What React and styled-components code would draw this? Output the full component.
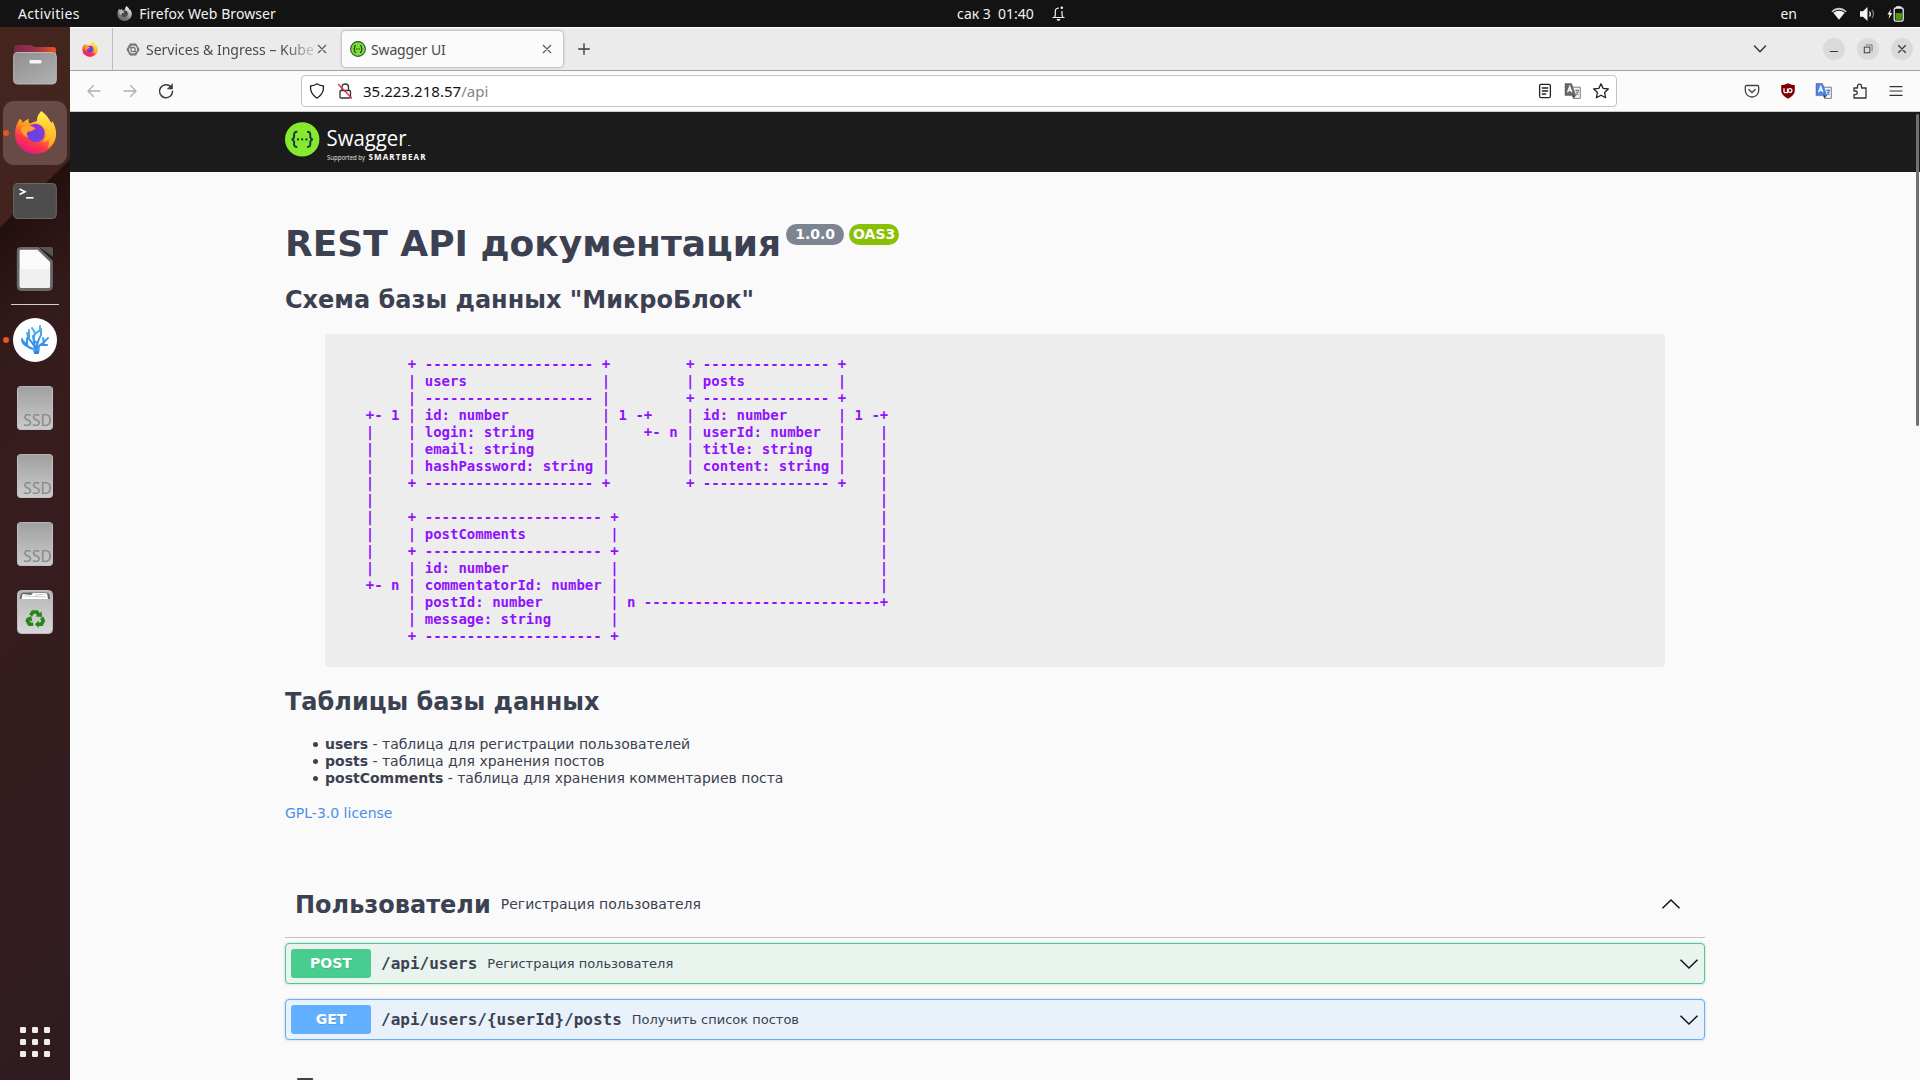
import React from "react";
import styled, { createGlobalStyle } from "styled-components";

const Global = createGlobalStyle`
  * { box-sizing: border-box; }
  html, body { margin: 0; padding: 0; overflow: hidden; }
  body { background: #fafafa; font-family: "Noto Sans", "Open Sans", sans-serif; }
  svg { display: block; flex: none; overflow: visible; }
`;

const Desktop = styled.div`
  width: 1920px; height: 1080px; overflow: hidden;
  display: grid; grid-template: 27px 1053px / 70px 1850px;
`;
const TopBar = styled.header`
  grid-column: 1 / 3; background: #131313; color: #f2f2f2;
  font-size: 14px; line-height: 27px;
  display: grid; grid-template-columns: 957px 1fr auto;
`;
const BarGroup = styled.div`
  display: flex; align-items: center; white-space: pre;
  padding-left: ${(p) => p.$left || 0}px; padding-right: ${(p) => p.$right || 0}px;
`;
const BarText = styled.span`
  letter-spacing: ${(p) => p.$spacing || 0}px; margin-right: ${(p) => p.$after || 0}px;
  white-space: pre;
`;

const Dock = styled.nav`
  display: flex; flex-direction: column; align-items: center; padding-top: 4px;
  background: linear-gradient(136deg, #46251f 0, #42231e 143px, #230f0e 145px, #2a1314 180px, #331a1b 230px, #381d1f 330px, #351c1f 500px, #301c20 780px);
`;
const DockItem = styled.div`
  width: 70px; height: 68px; flex: none; display: grid; place-items: center; position: relative;
`;
const DockTile = styled.div`
  width: 64px; height: 64px; border-radius: 11px; display: grid; place-items: center; padding-bottom: 2px;
  background: ${(p) => (p.$active ? "#684b47" : "transparent")};
`;
const RunningDot = styled.i`
  position: absolute; left: 3px; top: 31px; width: 6px; height: 6px; border-radius: 50%; background: #e95420;
`;
const DockRule = styled.div`
  width: 48px; height: 1px; background: #d5cdcb; margin: 1px 0; flex: none;
`;
const SsdIcon = styled.div`
  width: 36px; height: 44px; border-radius: 4px; border: 1px solid #c1c1c1; border-top-color: #b5b5b5;
  background: linear-gradient(#a0a0a0, #cbcbcb); color: #888;
  font: 15.5px/66px "Noto Sans", sans-serif; letter-spacing: .1px; text-align: right; overflow: hidden;
`;
const AppGrid = styled.div`
  margin-top: auto; margin-bottom: 23px; display: grid; grid-template-columns: repeat(3, 6px); gap: 6px;
`;
const AppDot = styled.i`width: 6px; height: 6px; border-radius: 1.3px; background: #f0efee;`;

const Window = styled.main`
  display: grid; grid-template-rows: 44px 41px 968px; background: #fafafa; min-width: 0;
`;
const TabStrip = styled.div`
  background: #ebebeb; border-top: 1px solid #fff; border-bottom: 1px solid #a3a3a3;
  display: flex; align-items: center; color: #4a4a4f; font-size: 14px;
`;
const PinnedTab = styled.div`
  width: 43px; height: 42px; border-right: 1px solid #bdbdbd; display: flex; align-items: center; padding-left: 12px;
`;
const Tab = styled.div`
  width: ${(p) => p.$width}px; height: 36px; display: flex; align-items: center; flex: none;
  padding: 0 10px 0 ${(p) => p.$pad}px; border-radius: 4px;
  background: ${(p) => (p.$active ? "#fbfbfb" : "transparent")};
  box-shadow: ${(p) => (p.$active ? "0 0 3px rgba(0,0,0,.42)" : "none")};
`;
const TabLabel = styled.span`
  width: ${(p) => p.$width}px; margin-left: ${(p) => p.$gap}px; overflow: hidden; white-space: nowrap; flex: none;
  letter-spacing: ${(p) => p.$spacing}px; line-height: 22px; padding-top: 2px;
  ${(p) => p.$fade && "mask-image: linear-gradient(90deg, #000 82%, transparent 104%);"}
`;
const Push = styled.div`margin-left: auto;`;
const WindowButtons = styled.div`display: flex; gap: 12px; margin: 0 7px 0 55px;`;
const RoundButton = styled.div`
  width: 22px; height: 22px; border-radius: 50%; background: #dadada; display: grid; place-items: center;
`;
const NavBar = styled.div`
  background: #fbfbfb; border-bottom: 1px solid #cbcbcb; display: flex; align-items: center; padding: 0 16px;
`;
const NavButtons = styled.div`display: flex; gap: 20px; width: 215px; align-items: center;`;
const UrlBox = styled.div`
  width: 1316px; height: 32px; background: #fff; border: 1px solid #c3c3c4; border-radius: 4px;
  display: flex; align-items: center; padding: 0 7px;
`;
const Address = styled.span`
  margin-left: 10px; font-size: 15px; color: #111; line-height: 24px; letter-spacing: .02px;
  span { color: #838386; }
`;
const UrlActions = styled.div`margin-left: auto; display: flex; gap: 12px;`;
const Extensions = styled.div`margin-left: auto; display: flex; gap: 20px;`;
const LockSlot = styled.div`margin-left: 12px;`;

const Page = styled.div`
  position: relative; overflow: hidden; background: #fafafa; color: #3b4151;
  font-family: "DejaVu Sans", sans-serif; font-size: 14px;
`;
const ScrollThumb = styled.div`
  position: absolute; right: 1px; top: 2px; width: 3px; height: 312px; border-radius: 2px; background: #717171;
`;
const PageHeader = styled.div`height: 60px; background: #1b1b1b; padding: 10px 0 0 215px;`;
const Wrapper = styled.div`width: 1420px; margin: 0 0 0 215px;`;
const TitleRow = styled.div`
  display: flex; align-items: flex-start; padding-top: 50px; height: 92px;
`;
const Title = styled.h1`margin: 0; font-size: 36px; line-height: 44px; white-space: nowrap;`;
const Badge = styled.span`
  height: 21px; line-height: 20px; border-radius: 10.5px; background: ${(p) => p.$color}; color: #fff;
  font-weight: 700; margin: 2px 0 0 5px; width: ${(p) => p.$width}px; text-align: center; flex: none;
`;
const Heading = styled.h2`margin: 0; font-size: 24px; line-height: 30px; height: ${(p) => p.$height}px; padding-top: ${(p) => p.$top || 0}px;`;
const Schema = styled.pre`
  margin: 0 40px; height: 333px; padding: 22px 7px; border-radius: 4px; background: #ededed; color: #9012fe;
  font: 700 14px/17px "DejaVu Sans Mono", monospace;
`;
const TableList = styled.ul`
  margin: 0; padding: 0 0 0 40px; line-height: 17px; height: 68px; list-style: none;
  li::before {
    content: ""; display: inline-block; width: 5px; height: 5px; border-radius: 50%; background: #3b4151;
    margin: 0 7.5px 0 -12.5px; vertical-align: 2px;
  }
`;
const License = styled.a`display: block; color: #4990e2; line-height: 18px;`;
const Section = styled.section`margin-top: ${(p) => p.$top}px;`;
const SectionHead = styled.div`
  display: flex; align-items: center; height: 66px; padding: 0 25px 0 10px; border-bottom: 1px solid #bfc0c2;
  margin-bottom: 5px;
`;
const SectionName = styled.h3`margin: 0 10px 0 0; font-size: 24px; line-height: 30px;`;
const SectionNote = styled.span`line-height: 18px; padding-bottom: 2px;`;
const SectionToggle = styled.div`margin-left: auto; padding-bottom: 2px;`;
const Operation = styled.div`
  height: 41px; margin-bottom: 15px; border: 1px solid ${(p) => p.$color}; border-radius: 4px;
  background: ${(p) => p.$tint}; box-shadow: 0 0 3px rgba(0,0,0,.19);
  display: flex; align-items: center; padding: 0 6px 0 5px;
`;
const Method = styled.span`
  width: 80px; height: 29px; line-height: 28px; border-radius: 3px; background: ${(p) => p.$color}; color: #fff;
  text-align: center; font-weight: 700; text-shadow: 0 1px 0 rgba(0,0,0,.1);
`;
const Path = styled.code`
  margin: 0 10px; font: 700 16px/20px "DejaVu Sans Mono", monospace;
`;
const Summary = styled.span`font-size: 13px;`;

const SCHEMA_LINES = [
  "         + -------------------- +         + --------------- +",
  "         | users                |         | posts           |",
  "         | -------------------- |         + --------------- +",
  "    +- 1 | id: number           | 1 -+    | id: number      | 1 -+",
  "    |    | login: string        |    +- n | userId: number  |    |",
  "    |    | email: string        |         | title: string   |    |",
  "    |    | hashPassword: string |         | content: string |    |",
  "    |    + -------------------- +         + --------------- +    |",
  "    |                                                            |",
  "    |    + --------------------- +                               |",
  "    |    | postComments          |                               |",
  "    |    + --------------------- +                               |",
  "    |    | id: number            |                               |",
  "    +- n | commentatorId: number |                               |",
  "         | postId: number        | n ----------------------------+",
  "         | message: string       |",
  "         + --------------------- +",
];

const TABLES = [
  ["users", "таблица для регистрации пользователей"],
  ["posts", "таблица для хранения постов"],
  ["postComments", "таблица для хранения комментариев поста"],
];

const OPERATIONS = [
  { method: "POST", path: "/api/users", text: "Регистрация пользователя", color: "#49cc90", tint: "#e8f4ed" },
  { method: "GET", path: "/api/users/{userId}/posts", text: "Получить список постов", color: "#61affe", tint: "#e9f1fa" },
];

const Line = ({ size = 16, d, color = "#3a3a3f", w = 1.4, children }) => (
  <svg width={size} height={size} viewBox="0 0 16 16" fill="none" stroke={color} strokeWidth={w} strokeLinecap="round" strokeLinejoin="round">
    {d && <path d={d} />}
    {children}
  </svg>
);

const Firefox = ({ size, id, mono }) => (
  <svg width={size} height={size} viewBox="0 0 44 44">
    <defs>
      <linearGradient id={id + "b"} x1=".85" y1="0" x2=".3" y2="1">
        <stop offset="0" stopColor={mono ? "#ddd" : "#fff44f"} /><stop offset=".4" stopColor={mono ? "#aaa" : "#ff9a1f"} />
        <stop offset=".7" stopColor={mono ? "#777" : "#ff3647"} /><stop offset="1" stopColor={mono ? "#666" : "#e31587"} />
      </linearGradient>
      <radialGradient id={id + "g"} cx=".5" cy=".7" r=".7">
        <stop offset="0" stopColor={mono ? "#555" : "#5a4be0"} /><stop offset="1" stopColor={mono ? "#333" : "#9b2fd8"} />
      </radialGradient>
      <linearGradient id={id + "y"} x1="0" y1="0" x2="0" y2="1">
        <stop offset="0" stopColor={mono ? "#eee" : "#fff04a"} /><stop offset="1" stopColor={mono ? "#999" : "#ffa51e"} />
      </linearGradient>
    </defs>
    <path d="M6 8Q8 9 9 12Q12 9 15 8Q14 11 16 13Q22 10 26 10L29 7Q38 9 39 14Q43 18 43 24A21 20 0 0 1 1 24Q1 15 6 8Z" fill={`url(#${id}b)`} />
    <path d="M28 0Q36 6 38 13Q39 11 39 10Q43 16 43 24Q42 33 35 38Q38 27 31 20Q30 14 24 12Q22 6 28 0Z" fill={`url(#${id}y)`} />
    <circle cx="22" cy="22.5" r="9.5" fill={`url(#${id}g)`} />
    <path d="M7 19Q9 14 16 15Q19 15 22 18Q19 21 15 21Q11 23 15 27Q9 26 7 19Z" fill={mono ? "#bbb" : "#ffa22b"} />
    <path d="M30 16Q36 25 29 32Q36 31 37 23Q36 17 30 16Z" fill={mono ? "#aaa" : "#ffbd2c"} opacity=".85" />
  </svg>
);

const Files = () => (
  <svg width="44" height="44" viewBox="0 0 44 44">
    <defs>
      <linearGradient id="fold"><stop offset="0" stopColor="#74294f" /><stop offset=".55" stopColor="#a33445" /><stop offset="1" stopColor="#e95420" /></linearGradient>
      <linearGradient id="gray" x2=".7" y2="1"><stop offset="0" stopColor="#8f8f8f" /><stop offset="1" stopColor="#adadad" /></linearGradient>
    </defs>
    <path d="M1 5Q1 2 4 2H17Q19 2 21 4H40Q43 4 43 7V22H1Z" fill="url(#fold)" />
    <rect x=".7" y="9.5" width="42.6" height="31.5" rx="4" fill="url(#gray)" stroke="#b9b9b9" />
    <rect x="16.5" y="17" width="12" height="3.4" rx="1" fill="#f7f7f7" />
  </svg>
);
const Terminal = () => (
  <svg width="44" height="44" viewBox="0 0 44 44">
    <rect x=".7" y="4.5" width="42.6" height="35" rx="4" fill="#4d4d4d" stroke="#686868" />
    <path d="M6.5 10L12 12.7L6.5 15.5" fill="none" stroke="#fff" strokeWidth="1.6" /><path d="M13 18.8H20.5" stroke="#fff" strokeWidth="1.6" />
  </svg>
);
const Libre = () => (
  <svg width="44" height="44" viewBox="0 0 44 44">
    <path d="M26 0H38Q40 0 40 2V10Z" fill="#555" />
    <path d="M8 1.3H25L38.5 14.5V39Q38.5 42.5 35 42.5H8.5Q5.2 42.5 5.2 39V4Q5.2 1.3 8 1.3Z" fill="#fafafa" stroke="#686868" strokeWidth="2.8" />
    <path d="M6.8 22H37V39Q37 41 34 41H9Q6.8 41 6.8 39Z" fill="#f0f0f0" />
  </svg>
);
const Coral = () => (
  <svg width="44" height="44" viewBox="0 0 44 44">
    <defs><linearGradient id="cor" x1="0" y1="0" x2="0" y2="1"><stop offset="0" stopColor="#4cb9ee" /><stop offset="1" stopColor="#2d7be8" /></linearGradient></defs>
    <circle cx="22" cy="22" r="22" fill="#fff" />
    <g fill="none" stroke="url(#cor)" strokeWidth="2" strokeLinecap="round" strokeLinejoin="round">
      <path d="M23 35V31Q16 31 14 27L9 22M14 27V20M14 28Q9 26 9 21M23 31Q20 25 16 21L14 15M16 20V12M23 31Q19 22 22 15L19 10M22 16L27 12V8M23 31Q25 22 28 17V11M24 25Q20 23 20 18M24 32Q26 26 31 25L30 20M29 26L35 20M29 27H34" />
      <path d="M20.8 31Q23 34 26 30L25 35H22Z" fill="#3385e8" />
    </g>
  </svg>
);
const Trash = () => (
  <svg width="44" height="44" viewBox="0 0 44 44">
    <defs><linearGradient id="tr" x1="0" y1="0" x2="0" y2="1"><stop offset="0" stopColor="#b6b6b6" /><stop offset="1" stopColor="#d8d8d8" /></linearGradient></defs>
    <rect x="4.5" y=".5" width="35" height="43" rx="4" fill="url(#tr)" stroke="#bdbdbd" />
    <path d="M7 9Q7 2.5 10 2.5H34Q37 2.5 37 9Z" fill="#666" />
    <path d="M8.5 9L9.5 4L18 5L20 3H34L35 9Z" fill="#fff" /><path d="M11 6L33 7M22 5L34 4" stroke="#aaa" strokeWidth=".6" />
    <g transform="translate(1.2 1)">
      <g fill="none" stroke="#26861a" strokeWidth="3.6">
        <path d="M16.5 24.5L18.6 21H22.6L24.6 24" /><path d="M27.6 26.5L29 30L27.3 33.2H23.5" /><path d="M19 33.2H15.2L13.2 29.8L14.8 27.4" />
      </g>
      <g fill="#26861a"><path d="M21.5 25.5L28 26L27.2 20.4Z" /><path d="M24.5 29.5L20.8 33.2L24.5 36.9Z" /><path d="M11.6 27.4L17.2 25L18 30.6Z" /></g>
    </g>
  </svg>
);

const Bell = () => (
  <svg width="13" height="15" viewBox="0 0 13 15" fill="none" stroke="#f2f2f2" strokeWidth="1.2">
    <path d="M.5 11.5H12.5M2.5 11.5L3.3 9V4.5Q3.8 2 7 2M10 5V9L10.8 11.5" /><circle cx="9.8" cy="1.8" r="1.3" fill="#f2f2f2" stroke="none" /><path d="M4.5 13H8.5L7.4 14.8H5.6Z" fill="#f2f2f2" stroke="none" />
  </svg>
);
const Wifi = () => (
  <svg width="16" height="14" viewBox="0 0 16 14"><path d="M.3 4.3Q8 -2.6 15.7 4.3L14.7 5.3Q8 .2 1.3 5.3Z" fill="#ccc" /><path d="M2.3 5.8Q8 1.7 13.7 5.8L8 12.7Z" fill="#f5f5f5" /></svg>
);
const Volume = () => (
  <svg width="15" height="14" viewBox="0 0 15 14" fill="none"><path d="M0 4.3H3L7.5 0V14L3 9.7H0Z" fill="#f5f5f5" /><path d="M9.5 4.5Q11.2 7 9.5 9.5" stroke="#eee" strokeWidth="1.3" /><path d="M12 2.8Q15 7 12 11.2" stroke="#777" strokeWidth="1.3" /></svg>
);
const Battery = () => (
  <svg width="17" height="16" viewBox="0 0 17 16"><path d="M4 3L.4 8.5H2.5L1.5 13L5.3 7H3.1Z" fill="#f5f5f5" /><rect x="7.2" y="2" width="9" height="13.2" rx="1.6" fill="none" stroke="#eee" strokeWidth="1.3" /><rect x="9.2" y=".2" width="5" height="1.8" fill="#eee" /><rect x="8.6" y="7" width="6.2" height="6.8" fill="#4e9a06" /></svg>
);
const Kube = () => (
  <svg width="14" height="13" viewBox="0 0 14 13"><path d="M4 .4H10L13.6 6.5L10 12.6H4L.4 6.5Z" fill="#737373" /><circle cx="7" cy="6.5" r="3.4" fill="none" stroke="#e4e4e4" strokeWidth="1.4" /><path d="M3 3L11 10" stroke="#737373" strokeWidth="1.2" /><circle cx="7" cy="6.5" r="1.5" fill="#eee" /></svg>
);
const Favicon = () => (
  <svg width="16" height="16" viewBox="0 0 16 16" fill="none" stroke="#173647"><circle cx="8" cy="8" r="7.4" fill="#7ede2b" stroke="#2b5a3a" strokeWidth="1.1" /><path d="M6 4.5Q4.5 4.5 4.7 6Q4.8 7.8 3.6 8Q4.8 8.2 4.7 10Q4.5 11.5 6 11.5M10 4.5Q11.5 4.5 11.3 6Q11.2 7.8 12.4 8Q11.2 8.2 11.3 10Q11.5 11.5 10 11.5" strokeWidth="1.1" /><path d="M6 8H10" strokeWidth="1.1" strokeDasharray="1 .6" /></svg>
);
const Cross = () => <Line size={10} w={1.7} color="#55555a" d="M2 2L14 14M14 2L2 14" />;
const Translate = ({ back, front, letter = "#fff" }) => (
  <svg width="16" height="16" viewBox="0 0 16 16">
    <path d="M6.5 4.2H15.3V15.4H8.6Z" fill="#f5f5f5" stroke="#7c7c7c" strokeWidth="1" />
    <path d="M0 .5H6.5L10.8 12.6H0Z" fill={back} stroke="#555" strokeWidth=".5" /><path d="M6.8 12.6H10.8L8.7 15.6Z" fill="#444" />
    <path d="M2.6 9.3L4.7 3.7L6.8 9.3M3.3 7.4H6" fill="none" stroke={letter} strokeWidth="1.3" />
    <path d="M10.3 7.4H14.2M12.2 6.2V7.4M13.6 7.5Q12.8 10.5 11 12M11 8.6L13.5 12" fill="none" stroke={front} strokeWidth="1.1" />
  </svg>
);
const Arrow = ({ up }) => (
  <svg width="18" height="10" viewBox="0 0 18 10" fill="none" stroke="#111" strokeWidth="1.5"><path d={up ? "M.5 9.2L9 1L17.5 9.2" : "M.5 .8L9 9L17.5 .8"} /></svg>
);

const SwaggerLogo = () => (
  <svg width="145" height="42" viewBox="0 0 145 42">
    <circle cx="17.2" cy="17.4" r="17.2" fill="#85ea2d" />
    <g fill="none" stroke="#173647" strokeWidth="2">
      <path d="M12.3 9.9Q9 9.6 9.1 12.7Q9.6 17.1 6.6 17.4Q9.6 17.7 9.1 22.1Q9 25.2 12.3 24.9" />
      <path d="M22.1 9.9Q25.4 9.6 25.3 12.7Q24.8 17.1 27.8 17.4Q24.8 17.7 25.3 22.1Q25.4 25.2 22.1 24.9" />
    </g>
    <g fill="#173647"><circle cx="13" cy="17.4" r="1.15" /><circle cx="17.2" cy="17.4" r="1.15" /><circle cx="21.4" cy="17.4" r="1.15" /></g>
    <text x="41.5" y="24" fontFamily="Open Sans" fontSize="21.5" textLength="80" lengthAdjust="spacingAndGlyphs" fill="#fff">Swagger</text>
    <rect x="123" y="23" width="2.4" height="1" fill="#aaa" />
    <text x="42" y="38" fontFamily="Open Sans" fontSize="6.3" textLength="38" lengthAdjust="spacingAndGlyphs" fill="#e4e4e4">Supported by</text>
    <text x="83.5" y="38" fontFamily="Open Sans" fontWeight="700" fontSize="8" textLength="57" lengthAdjust="spacing" fill="#fff">SMARTBEAR</text>
  </svg>
);

export default function App() {
  return (
    <>
      <Global />
      <Desktop>
        <TopBar>
          <BarGroup $left={18}>
            <BarText $spacing={0.35} $after={37}>Activities</BarText>
            <Firefox size={15} id="m" mono />
            <BarText $spacing={0.06}>{"  Firefox Web Browser"}</BarText>
          </BarGroup>
          <BarGroup>
            <BarText $after={18}>{"сак 3  01:40"}</BarText>
            <Bell />
          </BarGroup>
          <BarGroup $right={16}>
            <BarText $after={34}>en</BarText>
            <Wifi />
            <BarText $after={13} />
            <Volume />
            <BarText $after={12} />
            <Battery />
          </BarGroup>
        </TopBar>

        <Dock>
          <DockItem><Files /></DockItem>
          <DockItem><DockTile $active><Firefox size={43} id="d" /></DockTile><RunningDot /></DockItem>
          <DockItem><Terminal /></DockItem>
          <DockItem><Libre /></DockItem>
          <DockRule />
          <DockItem><Coral /><RunningDot /></DockItem>
          {[0, 1, 2].map((n) => <DockItem key={n}><SsdIcon>SSD</SsdIcon></DockItem>)}
          <DockItem><Trash /></DockItem>
          <AppGrid>{Array.from({ length: 9 }, (_, n) => <AppDot key={n} />)}</AppGrid>
        </Dock>

        <Window>
          <TabStrip>
            <PinnedTab><Firefox size={16} id="t" /></PinnedTab>
            <Tab $width={229} $pad={13}>
              <Kube />
              <TabLabel $width={168} $gap={6} $spacing={0} $fade>Services &amp; Ingress – Kube</TabLabel>
              <Push /><Cross /><BarText $after={5} />
            </Tab>
            <Tab $width={221} $pad={8} $active>
              <Favicon />
              <TabLabel $width={150} $gap={5} $spacing={-0.15}>Swagger UI</TabLabel>
              <Push /><Cross /><BarText $after={1} />
            </Tab>
            <BarText $after={15} />
            <Line size={12} w={1.8} d="M8 1V15M1 8H15" />
            <Push />
            <Line size={16} w={1.5} d="M2.5 5L8 10.7L13.5 5" />
            <WindowButtons>
              <RoundButton><Line size={10} w={1.6} d="M2 12H14" /></RoundButton>
              <RoundButton><Line size={10} w={1.5}><rect x="2" y="5" width="9" height="9" strokeLinejoin="miter" /><path d="M5 1.5H14.5V11" strokeWidth="1" /></Line></RoundButton>
              <RoundButton><Line size={10} w={2} d="M2.5 2.5L13.5 13.5M13.5 2.5L2.5 13.5" /></RoundButton>
            </WindowButtons>
          </TabStrip>

          <NavBar>
            <NavButtons>
              <Line color="#b0b0b2" w={1.3} d="M14 8H2M7.5 2.5L2 8L7.5 13.5" />
              <Line color="#b0b0b2" w={1.3} d="M2 8H14M8.5 2.5L14 8L8.5 13.5" />
              <Line w={1.5}><path d="M12.9 4A6.5 6.5 0 1 0 14.5 8.3" /><path d="M14.5 1V6H9.7Z" fill="#3a3a3f" strokeWidth=".6" /></Line>
            </NavButtons>
            <UrlBox>
              <Line color="#222" w={1.3} d="M8 .8Q10.5 2.7 14.5 3Q15 10.8 8 15.2Q1 10.8 1.5 3Q5.5 2.7 8 .8Z" />
              <LockSlot><Line color="#333" w={1.3}><rect x="3" y="7.5" width="10.5" height="7.5" rx="1" /><path d="M5 7V4Q5 1 8.3 1Q11.5 1 11.5 4V7" /><path d="M1.5 1.5L14.5 15" stroke="#e22850" /></Line></LockSlot>
              <Address>35.223.218.57<span>/api</span></Address>
              <UrlActions>
                <Line color="#222" w={1.3}><rect x="2.6" y="1.3" width="10.8" height="13.4" rx="1.5" /><path d="M5.3 5H10.7M5.3 8H10.7M5.3 11H8.7" /></Line>
                <Translate back="#666" front="#888" />
                <Line color="#222" w={1.3} d="M8 .8L10.2 5.4L15.3 6L11.6 9.5L12.6 14.7L8 12.2L3.4 14.7L4.4 9.5L.7 6L5.8 5.4Z" />
              </UrlActions>
            </UrlBox>
            <Extensions>
              <Line color="#444" w={1.3}><path d="M2.5 2.5H13.5Q14.7 2.5 14.7 4V7.5A6.7 6.5 0 0 1 1.3 7.5V4Q1.3 2.5 2.5 2.5Z" /><path d="M4.8 6.5L8 9.5L11.2 6.5" /></Line>
              <svg width="16" height="16" viewBox="0 0 16 16"><path d="M8 .3Q10.5 2 14.8 2.2V8Q14.5 12.5 8 15.8Q1.5 12.5 1.2 8V2.2Q5.5 2 8 .3Z" fill="#800000" /><path d="M4 5.3V8.4Q4 9.6 5.3 9.6H7.5V5.5" fill="none" stroke="#fff" strokeWidth="1.3" /><circle cx="10" cy="7.5" r="1.9" fill="none" stroke="#fff" strokeWidth="1.3" /></svg>
              <Translate back="#4a86ee" front="#4a86ee" />
              <Line color="#333" w={1.3} d="M2 5H5.5V3.2A2 2 0 0 1 9.5 3.2V5H14V15H2V11.6H3.5A1.8 1.8 0 0 0 3.5 8H2Z" />
              <Line color="#333" w={1.2} d="M2 3.6H14M2 8H14M2 12.4H14" />
            </Extensions>
          </NavBar>

          <Page>
            <PageHeader><SwaggerLogo /></PageHeader>
            <Wrapper>
              <TitleRow>
                <Title>REST API документация</Title>
                <Badge $color="#7d8492" $width={58}>1.0.0</Badge>
                <Badge $color="#89bf04" $width={50}>OAS3</Badge>
              </TitleRow>
              <Heading $height={70} $top={21}>Схема базы данных "МикроБлок"</Heading>
              <Schema>{SCHEMA_LINES.join("\n")}</Schema>
              <Heading $height={69} $top={20}>Таблицы базы данных</Heading>
              <TableList>
                {TABLES.map(([name, text]) => <li key={name}><b>{name}</b> - {text}</li>)}
              </TableList>
              <License>GPL-3.0 license</License>
              <Section $top={50}>
                <SectionHead>
                  <SectionName>Пользователи</SectionName>
                  <SectionNote>Регистрация пользователя</SectionNote>
                  <SectionToggle><Arrow up /></SectionToggle>
                </SectionHead>
                {OPERATIONS.map((op) => (
                  <Operation key={op.method} $color={op.color} $tint={op.tint}>
                    <Method $color={op.color}>{op.method}</Method>
                    <Path>{op.path}</Path>
                    <Summary>{op.text}</Summary>
                    <Push /><Arrow />
                  </Operation>
                ))}
              </Section>
              <Section $top={0}>
                <SectionHead><SectionName>Посты</SectionName></SectionHead>
              </Section>
            </Wrapper>
            <ScrollThumb />
          </Page>
        </Window>
      </Desktop>
    </>
  );
}
